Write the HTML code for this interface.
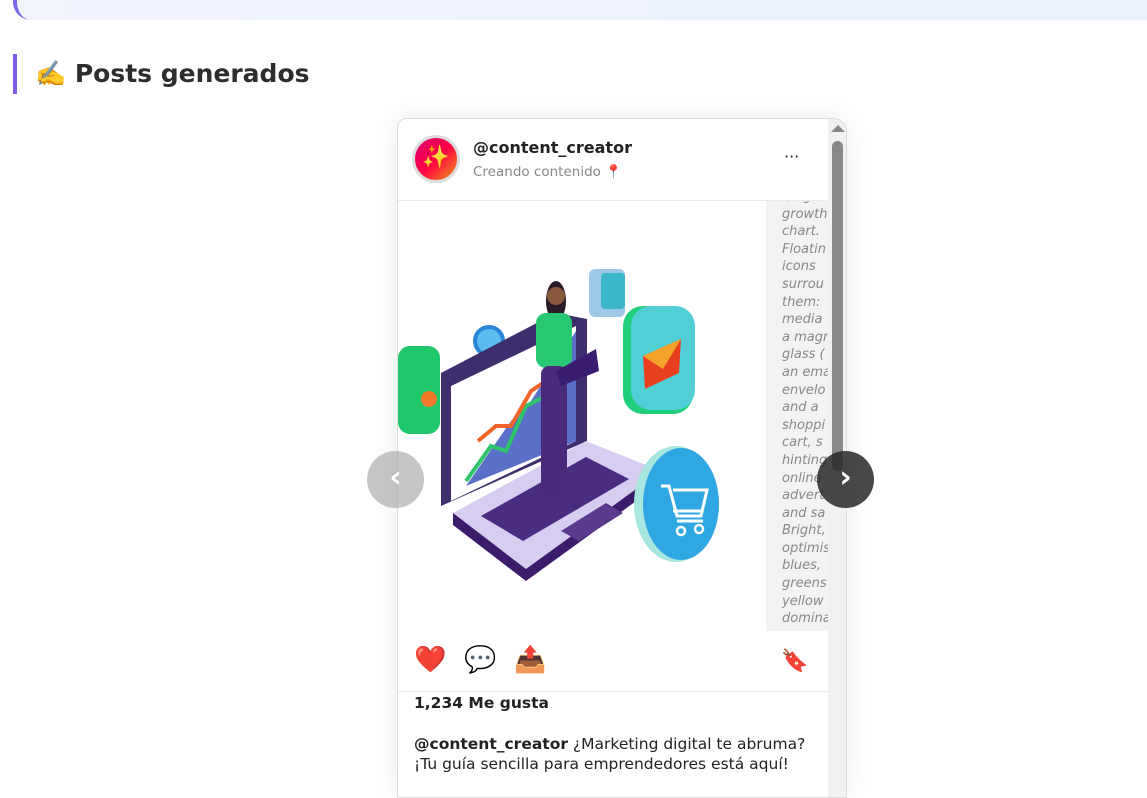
<!DOCTYPE html>
<html><head><meta charset="utf-8"><style>
*{margin:0;padding:0;box-sizing:border-box}
body{width:1147px;height:773px;overflow:hidden;background:#fff;font-family:"DejaVu Sans","Liberation Sans",sans-serif;position:relative;color:#222}
.banner{position:absolute;left:13px;top:-20px;width:1160px;height:40px;background:linear-gradient(90deg,#f1f3fd,#e9f2fd);border-left:4px solid #7b68ee;border-radius:0 0 0 18px}
.h{position:absolute;left:13px;top:54px;height:40px;border-left:4px solid #7b5ce8;padding-left:18px;font-size:25px;font-weight:bold;line-height:40px;color:#2d2d2d}
.card{position:absolute;left:397px;top:118px;width:450px;height:680px;background:#fff;border:1px solid #ddd;border-radius:10px 14px 0 0;box-shadow:0 0 30px rgba(0,0,0,.08);overflow:hidden}
.sb{position:absolute;left:430px;top:0;width:19px;height:680px;background:#f1f1f1}
.thumb{position:absolute;left:4px;top:22px;width:11px;height:330px;background:#888;border-radius:6px}
.arr{position:absolute;left:3px;top:6px;width:0;height:0;border-left:7px solid transparent;border-right:7px solid transparent;border-bottom:7px solid #888}
.av{position:absolute;left:14px;top:16px;width:48px;height:48px;border-radius:50%;border:3px solid #ddd;background:linear-gradient(135deg,#d6006f,#f04 50%,#f39a1a);text-align:center;line-height:40px;font-size:22px}
.name{position:absolute;left:75px;top:19px;font-weight:bold;font-size:16px}
.loc{position:absolute;left:75px;top:45px;font-size:13.5px;color:#888}
.dots{position:absolute;left:386px;top:28px;font-size:16px}
.hr{position:absolute;left:0;width:430px;height:1px;background:#eaeaea}
.alt{position:absolute;left:368px;top:82px;width:62px;height:430px;background:#f3f3f3;padding-left:16px;font-style:italic;color:#888;font-size:13px;line-height:17.6px;overflow:hidden;white-space:nowrap}
.acts{position:absolute;top:524px;font-size:26px}
.nav{position:absolute;top:451px;width:57px;height:57px;border-radius:50%;color:#fff;font-size:30px;font-weight:bold;text-align:center;line-height:53px}
</style></head><body>
<div class="banner"></div>
<div class="h">✍️ Posts generados</div>
<div class="card">
<div class="av">✨</div>
<div class="name">@content_creator</div>
<div class="loc">Creando contenido 📍</div>
<div class="dots">···</div>
<div class="hr" style="top:81px"></div>
<svg style="position:absolute;left:0;top:82px" width="368" height="430" viewBox="397 200 368 430">
<rect x="397" y="345" width="42" height="88" rx="12" fill="#1fc86a"/>
<circle cx="428" cy="398" r="8" fill="#f07a2a"/>
<rect x="588" y="268" width="36" height="48" rx="6" fill="#9ec8e8"/>
<rect x="600" y="272" width="24" height="36" rx="4" fill="#3bb7c9"/>
<rect x="622" y="305" width="70" height="108" rx="20" fill="#1fcf7a"/>
<rect x="630" y="305" width="64" height="104" rx="20" fill="#52cfd6"/>
<polygon points="642,355 680,338 678,372 644,388" fill="#e8401f"/>
<polygon points="642,355 680,338 662,368" fill="#f3a32a"/>
<circle cx="488" cy="340" r="14" fill="#5bbcef" stroke="#2a86d8" stroke-width="4"/>
<rect x="445" y="370" width="20" height="68" rx="8" fill="#eee"/>
<polygon points="440,505 440,372 555,312 586,318 586,440" fill="#3e2e6e"/>
<polygon points="450,500 450,385 575,325 575,440" fill="#fff"/>
<polygon points="465,485 510,420 530,400 575,330 575,440" fill="#5a6fc8"/>
<polyline points="465,480 490,445 505,450 525,405 545,395 560,360" fill="none" stroke="#2ec46a" stroke-width="4"/>
<polyline points="477,440 495,425 510,425 530,390 545,380" fill="none" stroke="#f0652a" stroke-width="4"/>
<polygon points="452,512 585,440 660,470 525,568" fill="#d7cdf1"/>
<polygon points="452,512 525,568 660,470 660,482 525,580 452,524" fill="#3b1c6a"/>
<polygon points="480,515 585,456 628,478 522,540" fill="#4a2c80"/>
<polygon points="560,530 605,502 622,512 578,540" fill="#5a3a8c"/>
<ellipse cx="555" cy="300" rx="10" ry="20" fill="#2b1a2a"/>
<circle cx="555" cy="295" r="9" fill="#8a5a3c"/>
<rect x="535" y="312" width="36" height="55" rx="10" fill="#28c774"/>
<rect x="540" y="365" width="26" height="130" rx="8" fill="#4a2a7a"/>
<polygon points="555,370 595,348 598,370 560,385" fill="#3a1c70"/>
<ellipse cx="675" cy="503" rx="42" ry="58" fill="#a8e6e0"/>
<ellipse cx="680" cy="503" rx="38" ry="56" fill="#2fa7e3"/>
<path d="M660 485 h8 l8 30 h24 l6 -26 h-34 M672 510 h30 M676 520 h26" fill="none" stroke="#fff" stroke-width="3"/>
<circle cx="680" cy="530" r="4" fill="none" stroke="#fff" stroke-width="2.5"/>
<circle cx="698" cy="528" r="4" fill="none" stroke="#fff" stroke-width="2.5"/>
</svg>
<div class="alt"><div style="margin-top:-13px">-, ..g<br>growth<br>chart.<br>Floatin<br>icons<br>surrou<br>them:<br>media<br>a magn<br>glass (<br>an ema<br>envelo<br>and a<br>shoppi<br>cart, s<br>hinting<br>online<br>advert<br>and sa<br>Bright,<br>optimis<br>blues,<br>greens<br>yellow<br>domina</div></div>
<div class="acts" style="left:16px;top:526px">❤️</div>
<div class="acts" style="left:66px;top:526px">💬</div>
<div class="acts" style="left:116px;top:526px">📤</div>
<div class="acts" style="left:383px;font-size:22px;top:530px">🔖</div>
<div class="hr" style="top:572px"></div>
<div style="position:absolute;left:16px;top:575px;font-weight:bold;font-size:15.5px">1,234 Me gusta</div>
<div style="position:absolute;left:16px;top:615px;font-size:15.5px;line-height:20px;width:410px">
<b>@content_creator</b> ¿Marketing digital te abruma? ¡Tu guía sencilla para emprendedores está aquí!</div>
<div class="sb"><div class="arr"></div><div class="thumb"></div></div>
</div>
<div class="nav" style="left:367px;background:rgba(160,160,160,.6)">‹</div>
<div class="nav" style="left:817px;background:rgba(40,40,40,.85)">›</div>
</body></html>
